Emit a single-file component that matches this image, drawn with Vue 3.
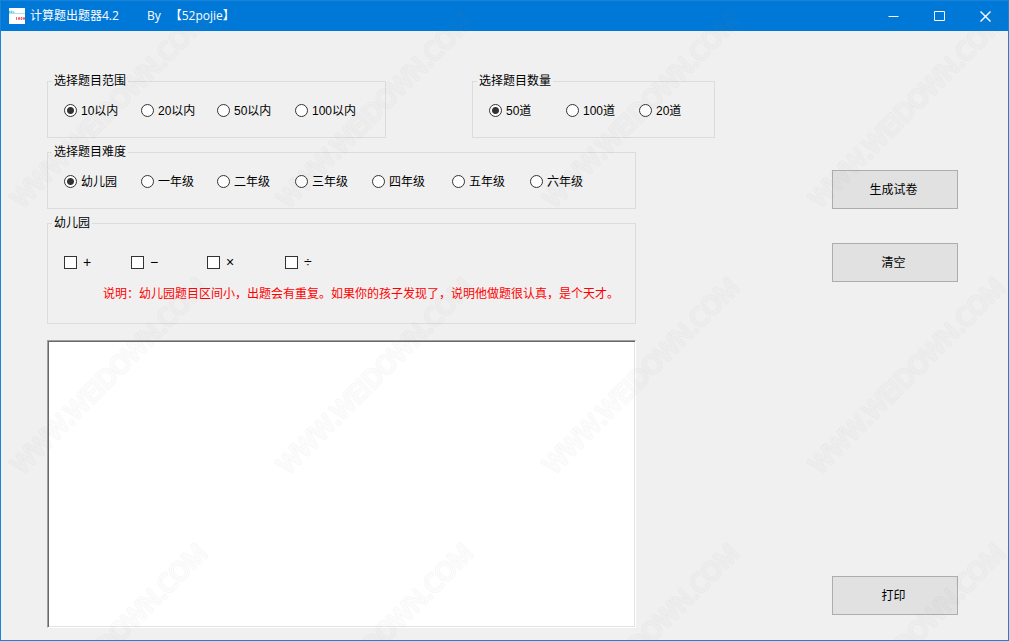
<script setup>
import { ref } from 'vue'

const ranges = ['10以内', '20以内', '50以内', '100以内']
const counts = ['50道', '100道', '20道']
const grades = ['幼儿园', '一年级', '二年级', '三年级', '四年级', '五年级', '六年级']
const operators = ['+', '−', '×', '÷']

const range = ref('10以内')
const count = ref('50道')
const grade = ref('幼儿园')
const picked = ref([])
const paper = ref('')
</script>

<template>
  <div class="window">
    <header class="titlebar">
      <svg class="app-icon" width="16" height="16" viewBox="0 0 16 16" aria-hidden="true">
        <rect width="16" height="16" fill="#fff" />
        <path d="M0.5 3v2M2 3h1v2H2zM4 4h1v1" stroke="#5cc3dc" fill="none" />
        <path d="M0 5.5h16" stroke="#a5e3ef" />
        <path d="M7.5 9v3M9.5 9.5h1v2h-1zM12 9.5h1v2h-1zM14.5 9.5h1v2h-1z" stroke="#f0646e" fill="none" />
      </svg>
      <h1 class="title">
        <span>计算题出题器4.2</span>
        <span class="author">By</span>
        <span>【52pojie】</span>
      </h1>
      <div class="controls">
        <button type="button" aria-label="最小化">
          <svg width="11" height="11" viewBox="0 0 11 11"><path d="M0.5 5.5h10" /></svg>
        </button>
        <button type="button" aria-label="最大化">
          <svg width="11" height="11" viewBox="0 0 11 11"><path d="M0.5 0.5h10v9h-10z" /></svg>
        </button>
        <button type="button" aria-label="关闭">
          <svg width="11" height="11" viewBox="0 0 11 11"><path class="cross" d="M0.5 0.5l10 10M10.5 0.5l-10 10" /></svg>
        </button>
      </div>
    </header>

    <main class="content">
      <form class="form" @submit.prevent>
        <fieldset class="group range">
          <legend>选择题目范围</legend>
          <div class="options">
            <label v-for="item in ranges" :key="item">
              <input v-model="range" type="radio" name="range" :value="item" />{{ item }}
            </label>
          </div>
        </fieldset>

        <fieldset class="group count">
          <legend>选择题目数量</legend>
          <div class="options">
            <label v-for="item in counts" :key="item">
              <input v-model="count" type="radio" name="count" :value="item" />{{ item }}
            </label>
          </div>
        </fieldset>

        <fieldset class="group wide">
          <legend>选择题目难度</legend>
          <div class="options">
            <label v-for="item in grades" :key="item">
              <input v-model="grade" type="radio" name="grade" :value="item" />{{ item }}
            </label>
          </div>
        </fieldset>

        <fieldset class="group wide operators">
          <legend>{{ grade }}</legend>
          <div class="options">
            <label v-for="item in operators" :key="item">
              <input v-model="picked" type="checkbox" :value="item" />{{ item }}
            </label>
          </div>
          <p class="note">说明：幼儿园题目区间小，出题会有重复。如果你的孩子发现了，说明他做题很认真，是个天才。</p>
        </fieldset>

        <textarea v-model="paper" class="paper wide" aria-label="试卷"></textarea>
      </form>

      <div class="actions">
        <button type="button">生成试卷</button>
        <button type="button" @click="paper = ''">清空</button>
        <button type="button" class="print">打印</button>
      </div>
    </main>

    <svg class="watermark" width="100%" height="100%" aria-hidden="true">
      <defs>
        <mask id="contour" maskUnits="userSpaceOnUse" x="-10" y="-40" width="300" height="60">
          <rect class="solid" x="-10" y="-40" width="300" height="60" />
          <text class="gap">WWW.WEIDOWN.COM</text>
        </mask>
        <pattern id="mark" width="266" height="266" patternUnits="userSpaceOnUse">
          <g transform="translate(21 208) rotate(-45)">
            <text class="mark" mask="url(#contour)">WWW.WEIDOWN.COM</text>
          </g>
        </pattern>
      </defs>
      <rect width="100%" height="100%" fill="url(#mark)" />
    </svg>
  </div>
</template>

<style>
body {
  margin: 0;
}
</style>

<style scoped>
.window {
  position: relative;
  display: flex;
  flex-direction: column;
  box-sizing: border-box;
  min-height: 100vh;
  border: 1px solid #1883d7;
  background: #f0f0f0;
  color: #000;
  font: 12px/16px "Liberation Sans", "Noto Sans CJK SC", sans-serif;
}

.titlebar {
  display: flex;
  align-items: center;
  height: 30px;
  padding-left: 8px;
  background: #0078d7;
  color: #fff;
}

.app-icon {
  margin-right: 5px;
}

.title {
  display: flex;
  flex: 1;
  margin: 0;
  font: 12px/16px "Open Sans", "Noto Sans CJK SC", sans-serif;
  white-space: nowrap;
}

.author {
  margin: 0 9px 0 28px;
}

.controls {
  display: flex;
  align-self: stretch;
}

.controls button {
  display: flex;
  align-items: center;
  justify-content: center;
  width: 46px;
  padding: 0;
  border: 0;
  background: none;
}

.controls path {
  fill: none;
  stroke: #fff;
}

.controls .cross {
  stroke-width: 1.4;
}

.content {
  display: flex;
  flex: 1;
  gap: 117px;
  padding: 0 50px 0 46px;
}

.form {
  display: grid;
  flex: 1;
  grid-template-columns: 339fr 86fr 164fr 79fr;
  grid-template-rows: auto auto auto 1fr;
  row-gap: 6px;
  min-width: 0;
  padding: 42px 0 12px;
}

.group {
  min-width: 0;
  margin: 0;
  padding: 13px 0 17px 16px;
  border: 1px solid #dcdcdc;
}

.group legend {
  height: 16px;
  margin-left: -12px;
  padding: 0 2px;
}

.count {
  grid-column: 3 / 5;
}

.wide {
  grid-column: 1 / 4;
}

.options {
  display: grid;
  grid-template-columns: 77px 76px 78px 77px 80px 78px auto;
}

.count .options {
  grid-template-columns: 77px 73px auto;
}

.options label {
  display: flex;
  align-items: flex-start;
  gap: 4px;
  line-height: 18px;
  white-space: nowrap;
}

.options input {
  flex: none;
  box-sizing: border-box;
  width: 13px;
  height: 13px;
  margin: 2px 0 0;
  border: 1px solid #333;
  background: #fff;
  appearance: none;
}

.operators {
  padding: 23px 0 21px 16px;
}

.operators .options {
  grid-template-columns: 67px 76px 78px auto;
}

.operators label {
  gap: 6px;
  font-size: 14px;
  line-height: 16px;
}

.options input[type="radio"] {
  border-radius: 50%;
}

.options input[type="radio"]:checked {
  background: radial-gradient(circle, #333 3px, #fff 4px);
}

.options input[type="checkbox"]:checked {
  background: #333;
  box-shadow: inset 0 0 0 2px #fff;
}

.note {
  margin: 16px 0 0 39px;
  color: #f00;
  white-space: nowrap;
}

.paper {
  box-sizing: border-box;
  width: 100%;
  height: auto;
  margin: 10px 0 0;
  padding: 4px;
  border: 1px solid;
  border-color: #a0a0a0 #fff #fff #a0a0a0;
  outline: 0;
  background: #fff;
  box-shadow: inset 1px 1px 0 #696969, inset -1px -1px 0 #e3e3e3;
  font: inherit;
  resize: none;
}

.actions {
  display: flex;
  flex: none;
  flex-direction: column;
  gap: 34px;
  width: 126px;
  padding: 139px 0 25px;
}

.actions button {
  height: 39px;
  padding: 0 3px 0 0;
  border: 1px solid #adadad;
  background: #e1e1e1;
  color: #000;
  font: inherit;
}

.actions .print {
  margin-top: auto;
}

.watermark {
  position: absolute;
  inset: 0;
  pointer-events: none;
}

.watermark text {
  fill: none;
  font: 25px "Open Sans", sans-serif;
  stroke-linejoin: round;
}

.solid {
  fill: #fff;
}

.gap {
  stroke: #000;
  stroke-width: 1px;
}

.mark {
  stroke: #808080;
  stroke-opacity: 0.07;
  stroke-width: 3px;
}
</style>
